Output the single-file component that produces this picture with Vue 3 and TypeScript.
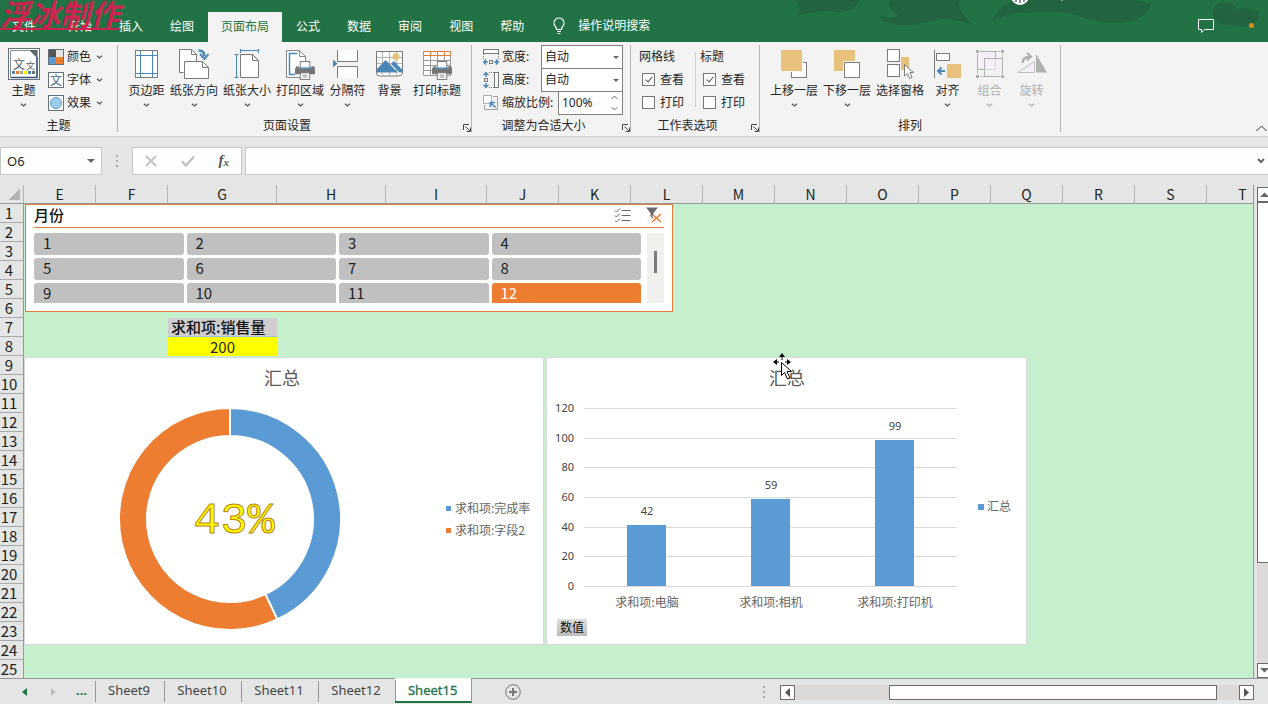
<script setup lang="ts">
import { ref } from 'vue'

interface BigButton {
  label: string
  icon: string
  menu: boolean
  disabled?: boolean
}

const tabs = ['文件', '开始', '插入', '绘图', '页面布局', '公式', '数据', '审阅', '视图', '帮助']
const activeTab = ref('页面布局')

const themeItems = [
  { label: '颜色', icon: 'colors' },
  { label: '字体', icon: 'fonts' },
  { label: '效果', icon: 'effects' },
]

const pageSetup: BigButton[] = [
  { label: '页边距', icon: 'margins', menu: true },
  { label: '纸张方向', icon: 'orientation', menu: true },
  { label: '纸张大小', icon: 'size', menu: true },
  { label: '打印区域', icon: 'area', menu: true },
  { label: '分隔符', icon: 'breaks', menu: true },
  { label: '背景', icon: 'background', menu: false },
  { label: '打印标题', icon: 'titles', menu: false },
]

const arrange: BigButton[] = [
  { label: '上移一层', icon: 'forward', menu: true },
  { label: '下移一层', icon: 'backward', menu: true },
  { label: '选择窗格', icon: 'selection', menu: false },
  { label: '对齐', icon: 'align', menu: true },
  { label: '组合', icon: 'group', menu: true, disabled: true },
  { label: '旋转', icon: 'rotate', menu: true, disabled: true },
]

const scaleText = ref('100%')
const optionGroups = [
  { title: '网格线', view: ref(true), print: ref(false), key: 'grid' },
  { title: '标题', view: ref(true), print: ref(false), key: 'head' },
]

const nameBox = ref('O6')
const formula = ref('')

const columns = [
  { name: 'E', width: 72 },
  { name: 'F', width: 72 },
  { name: 'G', width: 109 },
  { name: 'H', width: 109 },
  { name: 'I', width: 101 },
  ...'JKLMNOPQRST'.split('').map((name) => ({ name, width: 72 })),
]
const cells: Record<string, { text: string; kind: string }> = {
  G7: { text: '求和项:销售量', kind: 'cell-title' },
  G8: { text: '200', kind: 'cell-value' },
}

const months = Array.from({ length: 12 }, (_, i) => i + 1)
const selectedMonth = ref(12)

/* doughnut chart */
const rate = 0.43
const ring = { cx: 205, cy: 161, outer: 111, inner: 83 }
function point(radius: number, share: number): string {
  const a = share * Math.PI * 2
  return `${(ring.cx + radius * Math.sin(a)).toFixed(2)} ${(ring.cy - radius * Math.cos(a)).toFixed(2)}`
}
function slice(from: number, to: number): string {
  const large = to - from > 0.5 ? 1 : 0
  return `M${point(ring.outer, from)}A${ring.outer} ${ring.outer} 0 ${large} 1 ${point(ring.outer, to)}L${point(ring.inner, to)}A${ring.inner} ${ring.inner} 0 ${large} 0 ${point(ring.inner, from)}Z`
}
const slices = [
  { d: slice(0, rate), color: '#5b9bd5', name: '求和项:完成率' },
  { d: slice(rate, 1), color: '#ed7d31', name: '求和项:字段2' },
]

/* column chart */
const baseY = 229
const plotHeight = 178
const ticks = [0, 20, 40, 60, 80, 100, 120]
const yOf = (v: number): number => Math.round(baseY - (v / 120) * plotHeight)
const bars = [
  { name: '求和项:电脑', value: 42 },
  { name: '求和项:相机', value: 59 },
  { name: '求和项:打印机', value: 99 },
].map((b, i) => ({ ...b, x: 100 + i * 124 }))

const sheets = ['Sheet9', 'Sheet10', 'Sheet11', 'Sheet12', 'Sheet15']
const activeSheet = ref('Sheet15')
</script>

<template>
  <div class="app">
    <svg class="defs" aria-hidden="true">
      <symbol id="i-colors" viewBox="0 0 16 16">
        <path d="M0 0h8v8H0z" fill="#555" /><path d="M8 0h8v8H8z" fill="#e4e4e4" />
        <path d="M0 8h8v8H0z" fill="#5b9bd5" /><path d="M8 8h8v8H8z" fill="#ed7d31" />
        <rect x=".5" y=".5" width="15" height="15" fill="none" stroke="#66727a" />
      </symbol>
      <symbol id="i-effects" viewBox="0 0 16 16">
        <rect x=".5" y=".5" width="15" height="15" fill="#fff" stroke="#66727a" />
        <circle cx="8" cy="8" r="5.500" fill="#9dcbea" stroke="#5f9ecb" />
      </symbol>
      <symbol id="i-margins" viewBox="0 0 32 32">
        <rect x="4.500" y="2.500" width="22" height="27" fill="#fff" stroke="#7a7a7a" />
        <path d="M9.500 3v26M21.500 3v26M5 7.500h21M5 25.500h21" stroke="#4a86b8" fill="none" />
      </symbol>
      <symbol id="i-orientation" viewBox="0 0 32 32">
        <path d="M5.500 24.500h-4v-23h12l5 5v7" fill="#fff" stroke="#7a7a7a" />
        <path d="M13.500 1.500v5h5" fill="none" stroke="#7a7a7a" />
        <path d="M6.500 13.500h18l6 6v11h-24z" fill="#fff" stroke="#7a7a7a" />
        <path d="M24.500 13.500v6h6" fill="none" stroke="#7a7a7a" />
        <path d="M20.500 2.500q6 0 6 6" fill="none" stroke="#4a86b8" stroke-width="2.500" />
        <path d="M22 6l4.500 5 4-5" fill="none" stroke="#4a86b8" stroke-width="2" />
      </symbol>
      <symbol id="i-size" viewBox="0 0 32 32">
        <path d="M9.500 6.500h12l6 6v17h-18z" fill="#fff" stroke="#7a7a7a" />
        <path d="M21.500 6.500v6h6" fill="none" stroke="#7a7a7a" />
        <path d="M9.500 1v4M27.500 1v4M9.500 2.500h18M3.500 6.500h4M3.500 29.500h4M5.500 6.500v23" fill="none" stroke="#4a86b8" />
      </symbol>
      <symbol id="i-printer" viewBox="0 0 22 20">
        <rect x="5.500" y=".5" width="10" height="9" fill="#fff" stroke="#7a7a7a" />
        <path d="M1 6.500Q1 5.500 2 5.500H4V8H17V5.500H19Q21 5.500 21 7.500V14H0V8Z" fill="#757575" />
        <path d="M4 7.500h13" stroke="#4a86b8" stroke-width="1.500" />
        <rect x="5.500" y="12.500" width="10" height="7" fill="#fff" stroke="#7a7a7a" />
        <path d="M8 15h5M8 17h5" stroke="#8a8a8a" />
      </symbol>
      <symbol id="i-area" viewBox="0 0 32 32">
        <path d="M2.500 2.500h13l6 6v21h-19z" fill="#fff" stroke="#8a8a8a" />
        <path d="M15.500 2.500v6h6" fill="none" stroke="#8a8a8a" />
        <path d="M13 5.500H5.500v21H11" fill="none" stroke="#4a86b8" stroke-width="1.500" />
        <use href="#i-printer" x="11" y="13" width="21" height="19" />
      </symbol>
      <symbol id="i-breaks" viewBox="0 0 32 32">
        <path d="M5 2h21v12H5zM5 18h21v12H5z" fill="#fff" />
        <path d="M5.500 2v11.500h20V2M5.500 30V18.500h20V30" fill="none" stroke="#7a7a7a" />
        <path d="M1 11.500l4.500 4-4.500 4z" fill="#4a86b8" />
      </symbol>
      <symbol id="i-background" viewBox="0 0 32 32">
        <path d="M2.500 3.500h26v22q-2 3-6 2.500h-17q-3 0-3-3z" fill="#fff" stroke="#7a7a7a" />
        <path d="M8.500 4v24M15.500 4v24M22.500 4v24M3 9.500h25M3 15.500h25" stroke="#b5b5b5" fill="none" />
        <circle cx="22" cy="8.500" r="3.500" fill="#e8c17c" />
        <path d="M3 24.500V21l8.500-9L24 24.500z" fill="#4a86b8" />
        <path d="M17 16l3-3 8.500 9v2.500h-3z" fill="#4a86b8" />
      </symbol>
      <symbol id="i-titles" viewBox="0 0 32 32">
        <path d="M2.500 7.500h27v20h-27z" fill="#fff" stroke="#9a9a9a" />
        <path d="M3 12.500h26M3 17.500h26M3 22.500h26M9.500 8v19M16.500 8v19M23.500 8v19" stroke="#9a9a9a" fill="none" />
        <path d="M2.500 3.500h27v4h-27zM9.500 3.500v4M16.500 3.500v4M23.500 3.500v4" fill="#fff" stroke="#e07b39" />
        <use href="#i-printer" x="11" y="13" width="21" height="19" />
      </symbol>
      <symbol id="i-forward" viewBox="0 0 32 32">
        <rect x="13.500" y="14.500" width="15" height="15" fill="#fff" stroke="#7a7a7a" />
        <path d="M2 1h23v23H2z" fill="#f3f3f3" /><path d="M3 2h21v21H3z" fill="#e8c17c" />
      </symbol>
      <symbol id="i-backward" viewBox="0 0 32 32">
        <path d="M3 2h21v21H3z" fill="#e8c17c" /><path d="M12 13h18v18H12z" fill="#f3f3f3" />
        <rect x="13.500" y="14.500" width="15" height="15" fill="#fff" stroke="#7a7a7a" />
      </symbol>
      <symbol id="i-selection" viewBox="0 0 32 32">
        <path d="M12 9h13v13H12z" fill="#e8c17c" /><path d="M2 1h15v14H2z" fill="#f3f3f3" /><path d="M2 15h15v15H2z" fill="#f3f3f3" />
        <rect x="3.500" y="1.500" width="12" height="12" fill="#fff" stroke="#7a7a7a" />
        <rect x="3.500" y="16.500" width="12" height="12" fill="#fff" stroke="#7a7a7a" />
        <path d="M20.500 16.500V28l3-2.500 2 5 2.500-1-2-5h3.500z" fill="#fff" stroke="#7a7a7a" />
      </symbol>
      <symbol id="i-align" viewBox="0 0 32 32">
        <path d="M2.500 2v28" stroke="#7a7a7a" /><rect x="4.500" y="5.500" width="13" height="7" fill="#fff" stroke="#7a7a7a" />
        <path d="M15 16h14v14H15z" fill="#e8c17c" />
        <path d="M6 23h7M9.500 19.500L6 23l3.500 3.500" fill="none" stroke="#4a86b8" stroke-width="2" />
      </symbol>
      <symbol id="i-group" viewBox="0 0 32 32">
        <rect x="3.500" y="3.500" width="25" height="25" fill="none" stroke="#c4c4c4" />
        <rect x="3.500" y="3.500" width="18" height="18" fill="#f5f0f7" stroke="#b0b0b0" />
        <rect x="10.500" y="10.500" width="18" height="18" fill="#f5f0f7" fill-opacity=".6" stroke="#b0b0b0" />
        <path d="M1 1h5v5H1zM26 1h5v5h-5zM1 26h5v5H1zM26 26h5v5h-5z" fill="#f3f3f3" />
        <path d="M2 2h3v3H2zM27 2h3v3h-3zM2 27h3v3H2zM27 27h3v3h-3z" fill="#b0b0b0" />
      </symbol>
      <symbol id="i-rotate" viewBox="0 0 32 32">
        <path d="M20 6l11 18.500H20z" fill="#b0b0b0" /><path d="M1.500 24.500h17v-11z" fill="#f5f0f7" stroke="#c0c0c0" />
        <path d="M7 15q-1-6 8-6.500" fill="none" stroke="#b0b0b0" stroke-width="2.500" />
        <path d="M11 5l4 3.500-4 4" fill="none" stroke="#b0b0b0" stroke-width="2" />
      </symbol>
      <symbol id="i-width" viewBox="0 0 16 16">
        <rect x=".5" y=".5" width="15" height="4" fill="#fff" stroke="#7a7a7a" />
        <path d="M.5 5v5M15.500 5v5" stroke="#7a7a7a" stroke-dasharray="1 1" />
        <rect x="6.500" y="11.500" width="3" height="3" fill="#fff" stroke="#7a7a7a" />
        <path d="M1 13h4M3 10.500L.8 13 3 15.500M15 13h-4M13 10.500l2.200 2.500-2.200 2.500" fill="none" stroke="#4a86b8" stroke-width="1.500" />
      </symbol>
      <symbol id="i-height" viewBox="0 0 16 16">
        <rect x="11.500" y=".5" width="4" height="15" fill="#fff" stroke="#7a7a7a" />
        <path d="M6 .5h5M6 15.500h5" stroke="#7a7a7a" stroke-dasharray="1 1" />
        <rect x="1.500" y="6.500" width="3" height="3" fill="#fff" stroke="#7a7a7a" />
        <path d="M3 1v4M.5 3L3 .8 5.500 3M3 15v-4M.5 13L3 15.200 5.500 13" fill="none" stroke="#4a86b8" stroke-width="1.500" />
      </symbol>
      <symbol id="i-scale" viewBox="0 0 16 16">
        <path d="M10 1.500h4.500v13h-13V10" fill="none" stroke="#a0a0a0" />
        <rect x=".5" y=".5" width="8" height="8" fill="#fff" stroke="#666" stroke-dasharray="1 1" />
        <path d="M7.500 12V7.500H12M8 8l4.500 4.500" fill="none" stroke="#4a86b8" stroke-width="1.600" />
      </symbol>
      <symbol id="i-launch" viewBox="0 0 8 8">
        <path d="M.5 6V.5H6M2.500 2.500L7 7M7.500 3.500v4h-4" fill="none" stroke="#444" />
      </symbol>
      <symbol id="i-chev" viewBox="0 0 7 4">
        <path d="M1 .7L3.500 3 6 .7" fill="none" stroke="currentColor" stroke-width="1.200" />
      </symbol>
    </svg>

    <header class="titlebar">
      <svg class="swash" viewBox="0 0 480 42" aria-hidden="true">
        <g fill="#226440">
          <path d="M8 0H72C68 8 60 13 50 12C36 9 22 13 9 16Q14 8 8 0Z" />
          <path d="M102 0H172Q168 10 184 24L158 18Q130 26 110 25Q94 22 92 16Q104 20 110 15Q98 8 102 0Z" />
          <path d="M204 21Q210 6 226 0H348Q366 3 362 9Q350 24 322 23C300 22 290 13 270 12Q224 10 204 21Z" />
          <path d="M425 16Q424 3 437 2Q448 3 449 10Q458 5 462 10Q474 8 470 20Q464 28 450 26Q430 26 425 16Z" />
        </g>
        <circle cx="232" cy="-4" r="9" fill="#fff" />
        <path d="M232 -2v5M227 1h2M235 1h2" stroke="#222" />
        <circle cx="274" cy="0" r="1" fill="#b9c8bf" />
      </svg>
      <nav class="tabs">
        <button v-for="t in tabs" :key="t" class="tab" :class="{ active: t === activeTab }" @click="activeTab = t">{{ t }}</button>
      </nav>
      <button class="tell-me">
        <svg width="14" height="18" viewBox="0 0 14 18" fill="none" stroke="#fff" stroke-width="1.200">
          <path d="M4.500 12.500Q4.500 10.500 3 9A5 5 0 1 1 11 9Q9.500 10.500 9.500 12.500ZM5 14.500h4M5.500 16.500h3" />
        </svg>
        <span>操作说明搜索</span>
      </button>
      <button class="comment" aria-label="批注">
        <svg width="18" height="16" viewBox="0 0 18 16" fill="none" stroke="#fff"><path d="M1.500 1.500h15v10H7.500L4.500 14.500v-3h-3z" /></svg>
      </button>
      <span class="dot"></span>
      <span class="watermark">浮冰制作</span>
    </header>

    <section class="ribbon">
      <div class="group theme">
        <div class="content">
          <button class="big">
            <svg width="32" height="32" viewBox="0 0 32 32">
              <rect x=".5" y=".5" width="31" height="31" fill="#fff" stroke="#66727a" />
              <path d="M2.500 2.500H22L29 9.500V29.500H2.500Z" fill="#fff" stroke="#8a9399" />
              <path d="M29 9v20.500H3" fill="none" stroke="#35507c" stroke-width="1.500" />
              <path d="M21.500 2H29.500V10Z" fill="#59656d" />
              <text x="5" y="21" font-size="12" fill="#555f66">文</text>
              <text x="18" y="21" font-size="9" fill="#555f66">文</text>
              <rect x="4" y="23" width="3" height="3" fill="#4a8ac0" /><rect x="8" y="23" width="3" height="3" fill="#ed7d31" />
              <rect x="12" y="23" width="3" height="3" fill="#a5a5a5" /><rect x="16" y="23" width="3" height="3" fill="#fff000" />
              <rect x="20" y="23" width="3" height="3" fill="#4a8ac0" /><rect x="24" y="23" width="3" height="3" fill="#6a747b" />
            </svg>
            <span>主题</span>
            <svg class="chev" width="7" height="4"><use href="#i-chev" /></svg>
          </button>
          <div class="stack">
            <button v-for="i in themeItems" :key="i.label" class="small">
              <svg v-if="i.icon === 'fonts'" width="16" height="16" viewBox="0 0 16 16">
                <rect x=".5" y=".5" width="15" height="15" fill="#fff" stroke="#66727a" />
                <text x="2" y="13" font-size="12" fill="#3c6a96">文</text>
              </svg>
              <svg v-else width="16" height="16"><use :href="'#i-' + i.icon" /></svg>
              <span>{{ i.label }}</span>
              <svg class="chev" width="7" height="4"><use href="#i-chev" /></svg>
            </button>
          </div>
        </div>
        <div class="caption"><span>主题</span></div>
      </div>

      <div class="group setup">
        <div class="content">
          <button v-for="b in pageSetup" :key="b.label" class="big">
            <svg width="32" height="32"><use :href="'#i-' + b.icon" /></svg>
            <span>{{ b.label }}</span>
            <svg v-if="b.menu" class="chev" width="7" height="4"><use href="#i-chev" /></svg>
          </button>
        </div>
        <div class="caption">
          <span>页面设置</span>
          <button class="launch" aria-label="页面设置对话框"><svg width="8" height="8"><use href="#i-launch" /></svg></button>
        </div>
      </div>

      <div class="group fit">
        <div class="content rows">
          <div class="field">
            <svg width="16" height="16"><use href="#i-width" /></svg>
            <label for="fit-w">宽度:</label>
            <span class="pick"><select id="fit-w"><option>自动</option></select></span>
          </div>
          <div class="field">
            <svg width="16" height="16"><use href="#i-height" /></svg>
            <label for="fit-h">高度:</label>
            <span class="pick"><select id="fit-h"><option>自动</option></select></span>
          </div>
          <div class="field">
            <svg width="16" height="16"><use href="#i-scale" /></svg>
            <label for="fit-s">缩放比例:</label>
            <span class="spin">
              <input id="fit-s" v-model="scaleText" type="text" />
              <svg width="7" height="16" viewBox="0 0 7 16" fill="none" stroke="#777"><path d="M.5 4l3-3 3 3M.5 12l3 3 3-3" /></svg>
            </span>
          </div>
        </div>
        <div class="caption">
          <span>调整为合适大小</span>
          <button class="launch" aria-label="调整为合适大小对话框"><svg width="8" height="8"><use href="#i-launch" /></svg></button>
        </div>
      </div>

      <div class="group options">
        <div class="content">
          <div v-for="o in optionGroups" :key="o.key" class="checks">
            <span class="checks-title">{{ o.title }}</span>
            <label><input v-model="o.view.value" type="checkbox" /><span>查看</span></label>
            <label><input v-model="o.print.value" type="checkbox" /><span>打印</span></label>
          </div>
        </div>
        <div class="caption">
          <span>工作表选项</span>
          <button class="launch" aria-label="工作表选项对话框"><svg width="8" height="8"><use href="#i-launch" /></svg></button>
        </div>
      </div>

      <div class="group arrange">
        <div class="content">
          <button v-for="b in arrange" :key="b.label" class="big" :disabled="b.disabled">
            <svg width="32" height="32"><use :href="'#i-' + b.icon" /></svg>
            <span>{{ b.label }}</span>
            <svg v-if="b.menu" class="chev" width="7" height="4"><use href="#i-chev" /></svg>
          </button>
        </div>
        <div class="caption"><span>排列</span></div>
      </div>
      <button class="collapse" aria-label="折叠功能区">
        <svg width="11" height="7" viewBox="0 0 11 7" fill="none" stroke="#333"><path d="M.5 6l5-5 5 5" /></svg>
      </button>
    </section>

    <section class="formula-bar">
      <span class="name-box">
        <input v-model="nameBox" type="text" aria-label="名称框" />
      </span>
      <span class="grip"><i></i><i></i><i></i></span>
      <span class="fx">
        <button aria-label="取消"><svg width="12" height="12" viewBox="0 0 12 12"><path d="M1 1l10 10M11 1L1 11" stroke="#c4c4c4" stroke-width="2" /></svg></button>
        <button aria-label="输入"><svg width="14" height="12" viewBox="0 0 14 12"><path d="M1 6.500l4 4 8-9" fill="none" stroke="#c4c4c4" stroke-width="2.500" /></svg></button>
        <button class="fn" aria-label="插入函数">f<sub>x</sub></button>
      </span>
      <span class="formula">
        <input v-model="formula" type="text" aria-label="编辑栏" />
        <svg width="8" height="6" viewBox="0 0 8 6"><path d="M1 1l3 3 3-3" fill="none" stroke="#666" stroke-width="2" /></svg>
      </span>
    </section>

    <main class="workspace">
      <div class="pane">
        <table class="grid">
          <colgroup>
            <col class="col-head" />
            <col v-for="c in columns" :key="c.name" :style="{ width: c.width + 'px' }" />
          </colgroup>
          <thead>
            <tr>
              <th class="corner"></th>
              <th v-for="c in columns" :key="c.name" scope="col">{{ c.name }}</th>
            </tr>
          </thead>
          <tbody>
            <tr v-for="r in 25" :key="r">
              <th scope="row">{{ r }}</th>
              <td v-for="c in columns" :key="c.name" :class="cells[c.name + r]?.kind">{{ cells[c.name + r]?.text }}</td>
            </tr>
          </tbody>
        </table>

        <section class="slicer">
          <div class="slicer-head">
            <h2>月份</h2>
            <button aria-label="多选">
              <svg width="17" height="15" viewBox="0 0 17 15" fill="none" stroke="#666">
                <path d="M1 2.500l1.500 1.500L6 .5M1 7.500L2.500 9 6 5.500M1 12.500L2.500 14 6 10.500M7.500 2.500h9M7.500 7.500h9M7.500 12.500h9" />
              </svg>
            </button>
            <button aria-label="清除筛选器">
              <svg width="16" height="16" viewBox="0 0 16 16">
                <path d="M0 .5h12L7.500 6v6L4.500 9.500V6z" fill="#6b6b6b" />
                <path d="M7 8l8 7M15 7l-9 8" stroke="#fff" stroke-width="3" /><path d="M7 8l8 7M15 7l-9 8" stroke="#ed7d31" stroke-width="1.600" />
              </svg>
            </button>
          </div>
          <div class="slicer-body">
            <div class="slicer-items">
              <button v-for="m in months" :key="m" :class="{ on: m === selectedMonth }" @click="selectedMonth = m">{{ m }}</button>
            </div>
            <div class="slicer-scroll"><i></i></div>
          </div>
        </section>

        <figure class="chart ring-chart">
          <svg width="518" height="286" viewBox="0 0 518 286" role="img" aria-label="汇总">
            <text class="c-title" x="257" y="27">汇总</text>
            <path v-for="s in slices" :key="s.name" :d="s.d" :fill="s.color" stroke="#fff" stroke-width="2" />
            <text class="rate" x="209" y="175">43%</text>
            <g v-for="(s, i) in slices" :key="s.name">
              <rect x="421" :y="148 + i * 22" width="5" height="5" :fill="s.color" />
              <text class="c-text" x="430" :y="155 + i * 22">{{ s.name }}</text>
            </g>
          </svg>
        </figure>

        <figure class="chart bar-chart">
          <svg width="479" height="286" viewBox="0 0 479 286" role="img" aria-label="汇总">
            <text class="c-title" x="240" y="27">汇总</text>
            <g v-for="t in ticks" :key="t">
              <path :d="`M37 ${yOf(t) - 0.5}H410`" stroke="#d9d9d9" />
              <text class="c-num end" x="27" :y="yOf(t) + 3">{{ t }}</text>
            </g>
            <g v-for="b in bars" :key="b.name">
              <rect :x="b.x - 20" :y="yOf(b.value)" width="39" :height="baseY - yOf(b.value) - 1" fill="#5b9bd5" />
              <text class="c-num mid" :x="b.x" :y="yOf(b.value) - 10">{{ b.value }}</text>
              <text class="c-text mid" :x="b.x" y="249">{{ b.name }}</text>
            </g>
            <rect x="431" y="146" width="6" height="6" fill="#5b9bd5" />
            <text class="c-text" x="440" y="153">汇总</text>
          </svg>
          <button class="value-btn">数值</button>
        </figure>

        <svg class="cursor" width="24" height="32" viewBox="0 0 24 32" aria-hidden="true">
          <path d="M9 1v16M1 9h16" stroke="#fff" stroke-width="3" />
          <path d="M9 2v5M9 11v5M2 9h4M12 9h5" stroke="#000" />
          <path d="M9 0l3 4H6zM0 9l4-3v6zM18 9l-4-3v6z" fill="#000" />
          <path d="M8.500 9.500v13l3-3 3 6.500 2.500-1-3-6.500h4.500z" fill="#fff" stroke="#000" />
        </svg>
      </div>
      <div class="vscroll">
        <button aria-label="向上滚动"><svg width="9" height="5" viewBox="0 0 9 5"><path d="M0 5l4.500-4.500L9 5z" fill="#666" /></svg></button>
        <div class="thumb"></div>
        <div class="track"></div>
        <button aria-label="向下滚动"><svg width="9" height="5" viewBox="0 0 9 5"><path d="M0 0l4.500 4.500L9 0z" fill="#666" /></svg></button>
      </div>
    </main>

    <footer class="bottom">
      <div class="nav">
        <button aria-label="上一个"><svg width="5" height="8" viewBox="0 0 5 8"><path d="M5 0v8L0 4z" fill="#217346" /></svg></button>
        <button aria-label="下一个"><svg width="5" height="8" viewBox="0 0 5 8"><path d="M0 0v8l5-4z" fill="#bdbdbd" /></svg></button>
        <button class="more">...</button>
      </div>
      <div class="sheets">
        <button v-for="s in sheets" :key="s" :class="{ active: s === activeSheet }" @click="activeSheet = s">{{ s }}</button>
      </div>
      <button class="add" aria-label="新工作表">
        <svg width="16" height="16" viewBox="0 0 16 16" fill="none" stroke="#777"><circle cx="8" cy="8" r="7.300" /><path d="M4 8h8M8 4v8" stroke-width="2" /></svg>
      </button>
      <span class="grip"><i></i><i></i><i></i></span>
      <div class="hscroll">
        <button aria-label="向左滚动"><svg width="5" height="9" viewBox="0 0 5 9"><path d="M5 0v9L0 4.500z" fill="#555" /></svg></button>
        <div class="track"><div class="thumb"></div></div>
        <button aria-label="向右滚动"><svg width="5" height="9" viewBox="0 0 5 9"><path d="M0 0v9l5-4.500z" fill="#555" /></svg></button>
      </div>
    </footer>
  </div>
</template>

<style>
body {
  background: #e4e6e5;
}
</style>

<style scoped>
.app {
  display: flex;
  flex-direction: column;
  height: 100vh;
  overflow: hidden;
  font: 12px/16px "Noto Sans", "Noto Sans CJK SC", sans-serif;
  color: #262626;
  background: #e4e6e5;
}
* {
  box-sizing: border-box;
}
button,
input,
select {
  font: inherit;
  color: inherit;
  margin: 0;
  padding: 0;
  border: 0;
  background: none;
  border-radius: 0;
  outline: none;
}
svg {
  display: block;
  flex: none;
}
.defs {
  position: absolute;
  width: 0;
  height: 0;
}

/* title bar */
.titlebar {
  position: relative;
  display: flex;
  align-items: flex-end;
  height: 42px;
  flex: none;
  background: #217346;
  color: #fff;
  overflow: hidden;
}
.swash {
  position: absolute;
  right: 0;
  top: 0;
  width: 480px;
  height: 42px;
}
.tabs {
  display: flex;
  gap: 1px;
}
.tab {
  height: 30px;
  padding: 0 13px 1px;
}
.tab:first-child {
  padding: 0 12px 1px;
  margin-right: 6px;
}
.tab.active {
  background: #f3f3f3;
  color: #217346;
}
.tell-me {
  display: flex;
  align-items: center;
  gap: 12px;
  height: 32px;
  margin-left: 15px;
}
.comment {
  position: relative;
  margin: 0 34px 8px auto;
}
.dot {
  position: relative;
  width: 5px;
  height: 5px;
  margin: 0 14px 14px 0;
  border-radius: 50%;
  background: #e08a1c;
}
.watermark {
  position: absolute;
  left: 0;
  top: -7px;
  font: italic 700 30px/40px "Noto Sans CJK SC", sans-serif;
  color: #cc2350;
  text-decoration: underline;
  text-decoration-thickness: 2px;
  text-underline-offset: 2px;
}

/* ribbon */
.ribbon {
  position: relative;
  display: flex;
  flex: none;
  padding: 3px 0 4px;
  background: #f3f3f3;
  border-bottom: 1px solid #d0d2d1;
}
.group {
  display: flex;
  flex-direction: column;
  border-right: 1px solid #b5b5b5;
}
.content {
  display: flex;
  flex: 1;
  gap: 5px;
}
.theme {
  width: 118px;
}
.theme .content {
  padding-left: 5px;
}
.setup {
  width: 354px;
}
.setup .content {
  padding-left: 10px;
}
.fit {
  width: 159px;
}
.options {
  width: 129px;
}
.arrange {
  width: 301px;
}
.arrange .content {
  padding-left: 10px;
}
.caption {
  display: flex;
  height: 14px;
  margin-top: 4px;
  line-height: 16px;
}
.caption span {
  flex: 1;
  text-align: center;
}
.launch {
  width: 15px;
  padding: 5px 0 0 7px;
}
.big {
  display: flex;
  flex-direction: column;
  align-items: center;
  min-width: 37px;
  padding-top: 3px;
}
.big span {
  line-height: 16px;
  margin-top: 3px;
  white-space: nowrap;
}
.big .chev {
  margin-top: 4px;
}
.chev {
  color: #555;
}
button:disabled,
button:disabled .chev {
  color: #b0b0b0;
}
.small {
  display: flex;
  align-items: center;
  height: 23px;
  gap: 3px;
}
.stack {
  margin-left: 1px;
}
.small .chev {
  margin-left: 2px;
}
.content.rows {
  flex-direction: column;
  gap: 0;
  padding: 0 7px 0 11px;
}
.field {
  display: flex;
  align-items: center;
  height: 23px;
}
.field label {
  padding-left: 3px;
}
.pick {
  position: relative;
  margin-left: auto;
  width: 82px;
}
.pick select {
  display: block;
  appearance: none;
  width: 100%;
  height: 24px;
  padding: 0 3px;
  border: 1px solid #828282;
  background: #fff;
}
.pick::after,
.name-box::after {
  content: "";
  position: absolute;
  right: 4px;
  top: 11px;
  border: 3px solid transparent;
  border-top: 3px solid #666;
  border-bottom: 0;
}
.spin {
  display: flex;
  align-items: center;
  margin-left: auto;
  width: 65px;
  height: 24px;
  padding-right: 4px;
  border: 1px solid #828282;
  background: #fff;
}
.spin input {
  flex: 1;
  min-width: 0;
  padding-left: 3px;
}
.options .content {
  padding-left: 8px;
  gap: 4px;
}
.checks {
  display: flex;
  flex-direction: column;
  width: 57px;
}
.checks-title,
.checks label {
  display: flex;
  align-items: center;
  height: 23px;
}
.checks label {
  gap: 5px;
  padding-left: 3px;
}
.checks:first-child {
  background: linear-gradient(#d0d0d0, #d0d0d0) right 7px / 1px 55px no-repeat;
}
.checks input {
  appearance: none;
  position: relative;
  width: 13px;
  height: 13px;
  border: 1px solid #777;
  background: #fff;
}
.checks input:checked::after {
  content: "";
  position: absolute;
  left: 4px;
  top: 1px;
  width: 3px;
  height: 6px;
  border: solid #555;
  border-width: 0 1px 1px 0;
  transform: rotate(40deg);
}
.collapse {
  margin: auto 1px 0 auto;
}

/* formula bar */
.formula-bar {
  display: flex;
  flex: none;
  height: 48px;
  padding: 10px 0;
}
.name-box,
.fx,
.formula {
  position: relative;
  display: flex;
  align-items: center;
  border: 1px solid #c6c8c7;
  background: #fdfffe;
}
.name-box {
  width: 102px;
}
.name-box input {
  width: 80px;
  padding-left: 6px;
  font-size: 13px;
}
.name-box::after {
  right: 6px;
  border-width: 4px;
  border-bottom: 0;
}
.grip {
  display: flex;
  flex-direction: column;
  justify-content: center;
  align-items: center;
  gap: 3px;
  width: 30px;
}
.grip i {
  width: 2px;
  height: 2px;
  background: #a8a8a8;
}
.fx {
  width: 110px;
  justify-content: space-between;
  padding: 0 12px;
}
.fn {
  font: italic 700 15px/16px "Liberation Serif", serif;
  color: #555;
}
.fn sub {
  font-size: 11px;
  vertical-align: -1px;
}
.formula {
  flex: 1;
  margin-left: 3px;
  border-right: 0;
  padding-right: 3px;
}
.formula input {
  flex: 1;
}

/* worksheet */
.workspace {
  display: flex;
  flex: 1;
  min-height: 0;
}
.pane {
  position: relative;
  flex: 1;
  min-width: 0;
  overflow: hidden;
  border-right: 1px solid #979998;
  background: #c6efce;
}
.grid {
  table-layout: fixed;
  width: 1279px;
  border-collapse: separate;
  border-spacing: 0;
  font: 15px/18px "Noto Sans CJK SC", sans-serif;
}
.col-head {
  width: 24px;
}
.grid th,
.grid td {
  height: 19px;
  padding: 0;
  white-space: nowrap;
}
.grid th {
  font-weight: 400;
  color: #222;
  text-align: center;
  background: #e4e6e5;
}
.grid thead th {
  font-size: 14px;
  padding-top: 1px;
  line-height: 17px;
  border-bottom: 1px solid #979998;
  border-right: 1px solid #b4b6b5;
}
.grid tbody th {
  border-bottom: 1px solid #a9abaa;
  border-right: 1px solid #979998;
  padding-right: 5px;
}
.grid .corner {
  background: linear-gradient(135deg, transparent 50%, #b2b4b3 50%) 9px 4px / 11px 11px no-repeat #e4e6e5;
}
.cell-title {
  background: #d0cece;
  border-bottom: 1px solid #9bc2e6;
  font-weight: 500;
  text-align: left;
  color: #111;
}
.grid .cell-title {
  padding-left: 3px;
}
.cell-value {
  background: #ff0;
  text-align: center;
}

/* slicer */
.slicer {
  position: absolute;
  left: 25px;
  top: 19px;
  width: 648px;
  height: 108px;
  padding: 0 8px;
  border: 1px solid #e07b39;
  background: #fff;
}
.slicer-head {
  display: flex;
  align-items: center;
  gap: 15px;
  height: 23px;
  padding: 0 2px 2px 0;
  border-bottom: 1px solid #e07b39;
}
.slicer-head h2 {
  flex: 1;
  margin: 0;
  font: 500 15px/18px "Noto Sans CJK SC", sans-serif;
  color: #111;
}
.slicer-body {
  display: flex;
  gap: 6px;
  height: 70px;
  margin-top: 5px;
}
.slicer-items {
  display: grid;
  flex: 1;
  grid-template-columns: repeat(4, 1fr);
  grid-auto-rows: 22px;
  gap: 3px;
  overflow: hidden;
}
.slicer-items button {
  padding: 0 0 2px 9px;
  border-radius: 3px;
  background: #c0c0c0;
  color: #222;
  text-align: left;
  font: 15px/20px "Noto Sans CJK SC", sans-serif;
}
.slicer-items .on {
  background: #ed7d31;
  color: #fff;
}
.slicer-scroll {
  width: 17px;
  padding: 18px 7px;
  background: #f0f0ef;
}
.slicer-scroll i {
  display: block;
  width: 3px;
  height: 22px;
  background: #7d7d7d;
}

/* charts */
.chart {
  position: absolute;
  top: 172px;
  margin: 0;
  border: 1px solid #d9d9d9;
  background: #fff;
}
.ring-chart {
  left: 24px;
}
.bar-chart {
  left: 546px;
}
.c-title {
  font: 18px "Noto Sans CJK SC", sans-serif;
  fill: #595959;
  text-anchor: middle;
}
.c-text {
  font: 12px "Noto Sans CJK SC", sans-serif;
  fill: #666;
}
.c-num {
  font: 11px "Noto Sans", sans-serif;
  fill: #444;
}
.mid {
  text-anchor: middle;
}
.end {
  text-anchor: end;
}
.rate {
  font: 45px "Liberation Mono", monospace;
  fill: #ff0;
  stroke: #c0801a;
  stroke-width: 1px;
  text-anchor: middle;
}
.value-btn {
  position: absolute;
  left: 10px;
  bottom: 8px;
  padding: 0 3px;
  line-height: 17px;
  background: linear-gradient(#dededa, #bdbdbd);
  color: #111;
}
.cursor {
  position: absolute;
  left: 773px;
  top: 168px;
}

/* scroll bars */
.vscroll {
  display: flex;
  flex-direction: column;
  width: 11px;
  margin: 2px 0 0 3px;
  overflow: hidden;
}
.vscroll button,
.hscroll button {
  display: flex;
  flex: none;
  align-items: center;
  justify-content: center;
  width: 15px;
  height: 15px;
  border: 1px solid #6a6a6a;
  background: #fff;
}
.vscroll .thumb {
  flex: 361 1 0;
  width: 15px;
  border: 1px solid #6a6a6a;
  background: #fff;
}
.vscroll .track {
  flex: 101 1 0;
  background: #dbdad9;
}

/* bottom bar */
.bottom {
  display: flex;
  flex: none;
  height: 26px;
  border-top: 1px solid #979998;
}
.nav {
  display: flex;
  align-items: center;
  width: 95px;
  padding-left: 22px;
  gap: 24px;
}
.nav .more {
  margin: -4px 0 0 -4px;
  font-weight: 700;
  color: #217346;
  font-size: 13px;
}
.sheets {
  display: flex;
  font: 13px/20px "Noto Sans", sans-serif;
  color: #444;
}
.sheets button {
  height: 24px;
  padding: 0 14px 0 13px;
  position: relative;
  border-bottom: 2px solid transparent;
}
.sheets button + button {
  min-width: 77px;
}
.sheets button::before {
  content: "";
  position: absolute;
  left: 0;
  top: 2px;
  height: 21px;
  width: 1px;
  background: #979998;
}
.sheets .active {
  margin-top: -1px;
  height: 25px;
  background: #fff;
  border-bottom-color: #217346;
  border-right: 1px solid #979998;
  color: #217346;
  -webkit-text-stroke: 0.3px #217346;
}
.add {
  margin: 0 auto 0 33px;
}
.bottom .grip {
  width: 32px;
}
.hscroll {
  display: flex;
  width: 474px;
  height: 15px;
  margin: 6px 14px 0 0;
}
.hscroll .track {
  flex: 1;
  padding: 0 22px 0 94px;
  background: #dbdad9;
}
.hscroll .thumb {
  height: 15px;
  border: 1px solid #6a6a6a;
  background: #fff;
}
</style>
